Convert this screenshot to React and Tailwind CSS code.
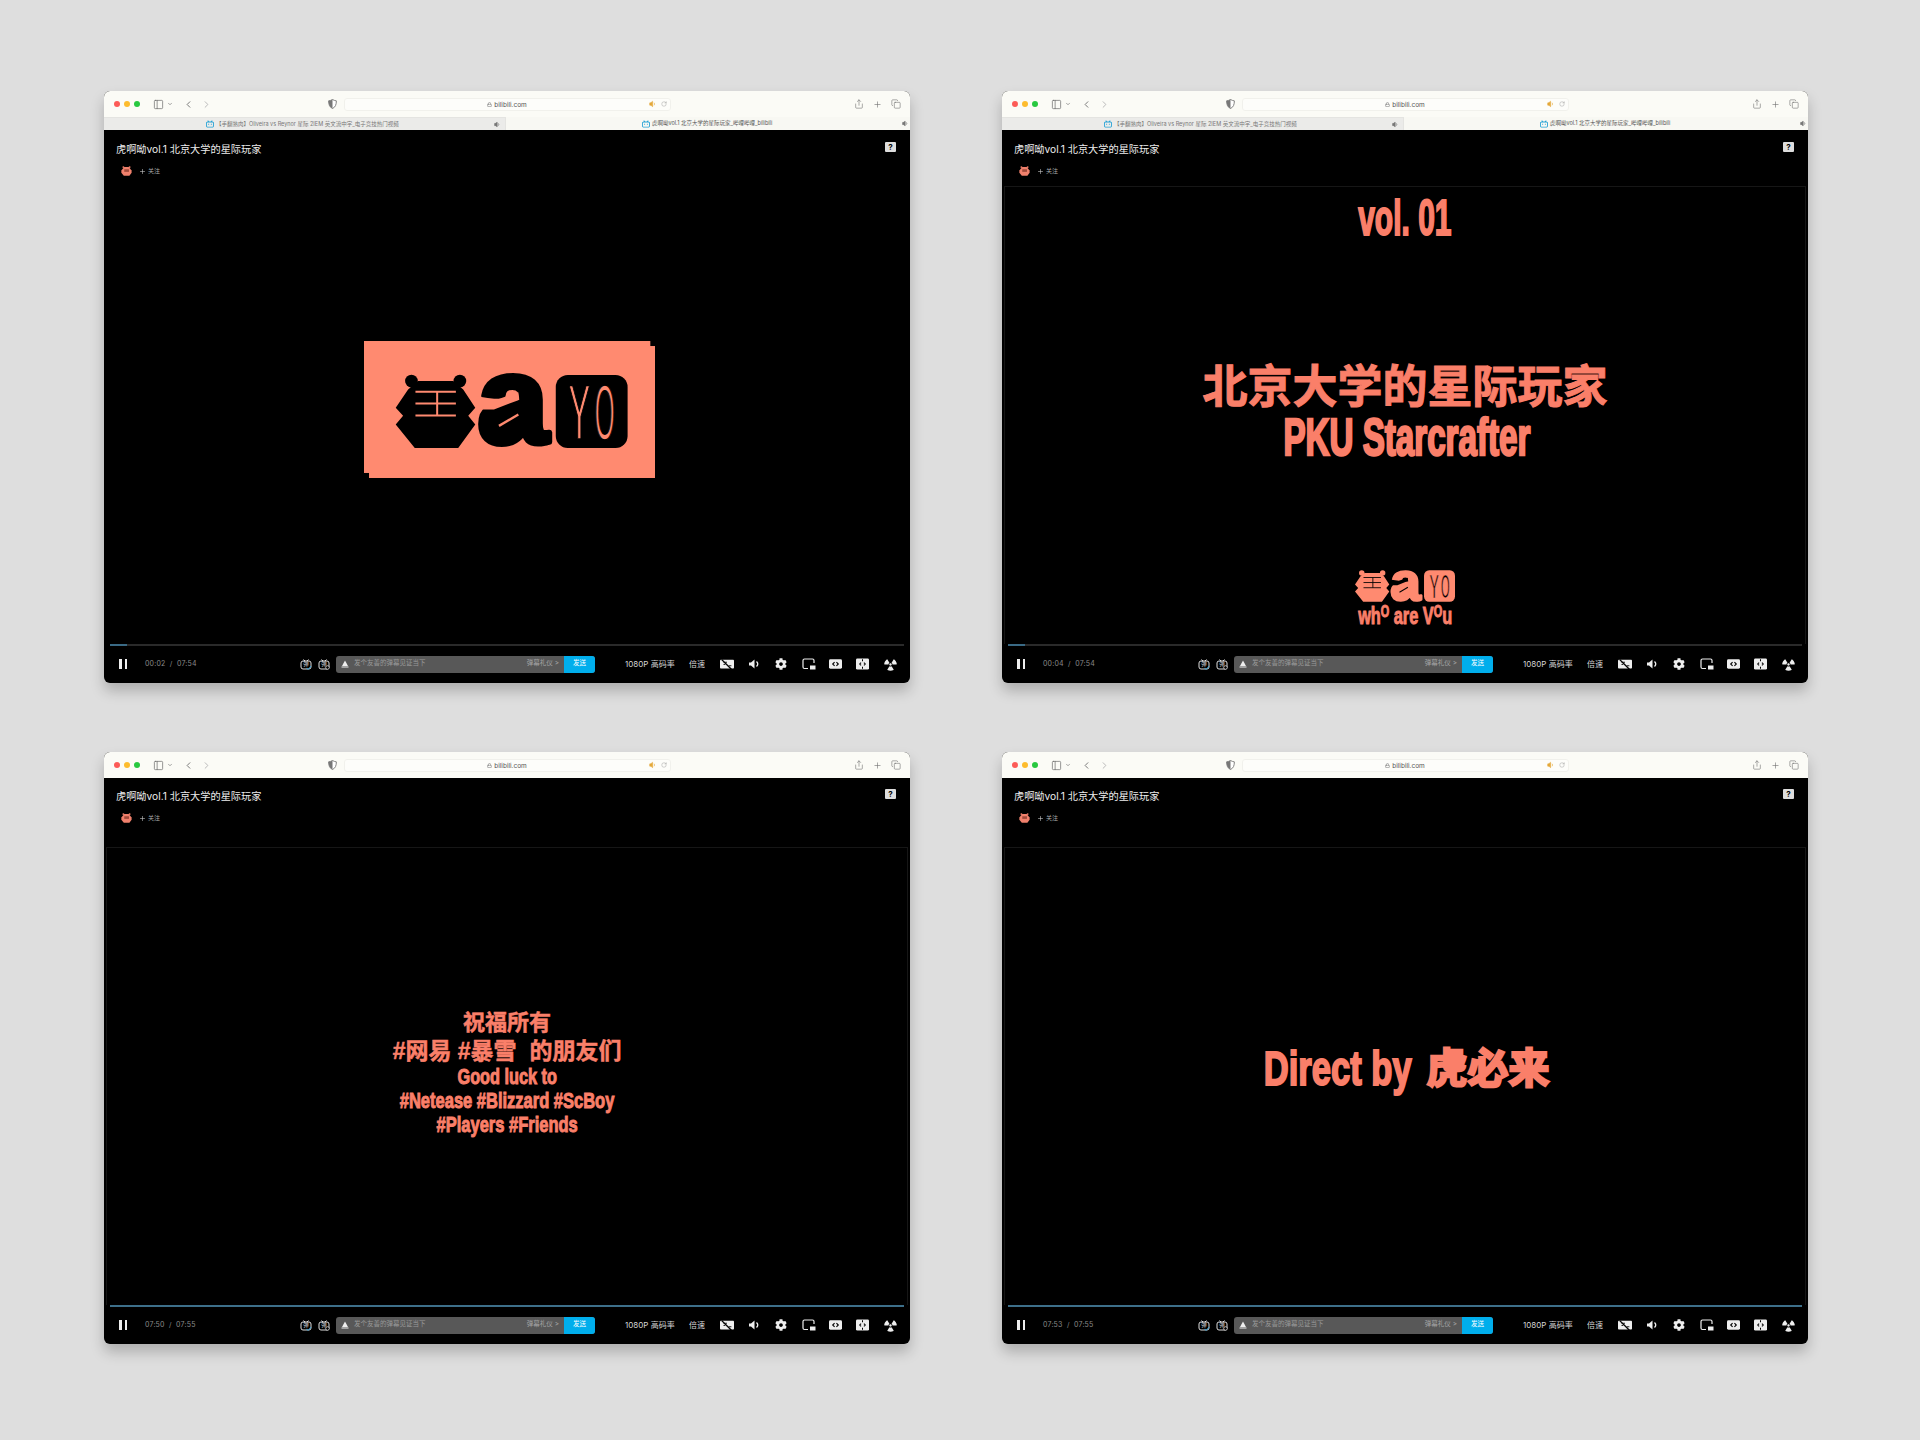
import { ChevronDown, ChevronLeft, ChevronRight, Copy, Lock, PanelLeft, Plus, RotateCw, Share, Volume1 } from 'lucide-react';
import { SiBilibili } from 'react-icons/si';
import { FaCog, FaRadiation } from 'react-icons/fa';

const ui = "font-['Inter','Noto_Sans_CJK_SC',sans-serif]";
const peach = '#ff8a70';

// tiger head + a + YO box, drawn in the coordinates of a 3x crop
function Mark({ fg, bg }) {
  return (
    <g>
      <circle cx="185" cy="155" r="19" fill={fg} />
      <circle cx="330" cy="155" r="19" fill={fg} />
      <polygon
        points="205,155 310,155 340,180 376,235 355,259 376,285 325,355 195,355 138,285 160,259 138,235 175,180"
        fill={fg}
      />
      <path d="M197 187H318M197 222H318M197 258H318M262 187V258" stroke={bg} strokeWidth="6" fill="none" />
      <text
        x="0"
        y="0"
        transform="translate(383 341) scale(1.03 1)"
        fontFamily="Liberation Sans"
        fontWeight="700"
        fontSize="370"
        fill={fg}
        stroke={fg}
        strokeWidth="18"
        strokeLinejoin="round"
      >
        a
      </text>
      <rect x="430" y="240" width="85" height="80" fill={fg} />
      <polygon points="380,200 442,210 505,188 505,212 432,240 380,240" fill={bg} />
      <path d="M447 289L505 255" stroke={bg} strokeWidth="7" />
      <rect x="617" y="137" width="215" height="218" rx="36" fill={fg} />
      <text
        x="0"
        y="0"
        transform="translate(655 329) scale(0.42 1)"
        fontFamily="Liberation Sans"
        fontSize="232"
        fill={bg}
        stroke={fg}
        strokeWidth="5"
      >
        Y
      </text>
      <text
        x="0"
        y="0"
        transform="translate(734 329) scale(0.33 1)"
        fontFamily="Liberation Sans"
        fontSize="232"
        fill={bg}
        stroke={fg}
        strokeWidth="5"
      >
        O
      </text>
    </g>
  );
}

function LogoCard() {
  return (
    <svg viewBox="43 35 871 410" className="w-[291px] h-[137px] shrink-0">
      <rect x="43" y="35" width="857" height="395" fill={peach} />
      <rect x="58" y="50" width="856" height="395" fill={peach} />
      <Mark fg="#000" bg={peach} />
    </svg>
  );
}

function SmallLogo() {
  return (
    <svg viewBox="138 130 694 225" className="w-[100px] h-[33px] shrink-0">
      <Mark fg={peach} bg="#000" />
    </svg>
  );
}

function TigerAvatar() {
  return (
    <svg viewBox="130 130 255 230" className="w-[11px] h-[10px]">
      <circle cx="185" cy="155" r="22" fill="#f0806c" />
      <circle cx="330" cy="155" r="22" fill="#f0806c" />
      <polygon points="205,155 310,155 376,235 376,285 325,355 195,355 138,285 138,235" fill="#f0806c" />
      <rect x="205" y="205" width="110" height="60" fill="#a0493a" />
    </svg>
  );
}

// condensed display line: the box keeps the real width, the glyphs are squeezed to fit
function Squeezed({ box, className, children }) {
  return (
    <div className={`flex justify-center shrink-0 ${box}`}>
      <span className={`shrink-0 whitespace-nowrap font-bold text-[#fa7f69] font-['Liberation_Sans','Noto_Sans_CJK_SC',sans-serif] ${className}`}>
        {children}
      </span>
    </div>
  );
}

function Toolbar() {
  return (
    <div className="flex items-center h-[26px] bg-[#fbfbf6] text-[#6f6f6f] shrink-0">
      <div className="flex gap-[4px] ml-[10px]">
        <span className="w-[6px] h-[6px] rounded-full bg-[#fc5b57]" />
        <span className="w-[6px] h-[6px] rounded-full bg-[#fdbc2e]" />
        <span className="w-[6px] h-[6px] rounded-full bg-[#28c840]" />
      </div>
      <PanelLeft className="w-[11px] h-[11px] ml-[13px]" strokeWidth={1.6} />
      <ChevronDown className="w-[6px] h-[6px] ml-[3px]" strokeWidth={2.5} />
      <ChevronLeft className="w-[11px] h-[11px] ml-[10px]" strokeWidth={2} />
      <ChevronRight className="w-[11px] h-[11px] ml-[7px] text-[#b5b5b5]" strokeWidth={2} />
      <svg viewBox="0 0 10 11" className="w-[9px] h-[10px] ml-[116px]">
        <path d="M5 .5C6.5 1.5 8 1.8 9.3 2c0 4-1 7-4.3 8.5C1.7 9 .7 6 .7 2 2 1.8 3.5 1.5 5 .5Z" fill="#fff" stroke="#777" />
        <path d="M5 .5C3.5 1.5 2 1.8.7 2c0 4 1 7 4.3 8.5Z" fill="#777" />
      </svg>
      <div className="flex items-center w-[327px] h-[13px] ml-[7px] rounded-[3px] bg-[#fdfdfa] border border-[#f1f1ec]">
        <div className="flex items-center justify-center gap-[2px] flex-1 pl-[20px] pt-[1px]">
          <Lock className="w-[5px] h-[5px] text-[#888]" strokeWidth={3} />
          <span className={`${ui} text-[6.5px] leading-[8px] text-[#555]`}>bilibili.com</span>
        </div>
        <Volume1 className="w-[8px] h-[8px] text-[#e4a93a] fill-[#e4a93a]" strokeWidth={1.5} />
        <RotateCw className="w-[6px] h-[6px] ml-[4px] mr-[3px] text-[#888]" strokeWidth={1.5} />
      </div>
      <Share className="w-[10px] h-[10px] ml-[183px]" strokeWidth={1.4} />
      <Plus className="w-[9px] h-[9px] ml-[9px]" strokeWidth={1.6} />
      <Copy className="w-[10px] h-[10px] ml-[9px]" strokeWidth={1.4} />
    </div>
  );
}

function TabStrip() {
  return (
    <div className={`flex h-[13px] shrink-0 ${ui} text-[5.5px] text-[#777]`}>
      <div className="flex items-center w-[402px] pl-[102px] bg-[#ebebe9] border-t border-[#e4e4e1] border-r">
        <SiBilibili className="w-[8px] h-[8px] text-[#27a3d6]" />
        <span className="ml-[2px] w-[183px] whitespace-nowrap">【手翻熟肉】Oliveira vs Reynor 星际 2IEM 英文流中字_电子竞技热门视频</span>
        <Volume1 className="w-[7px] h-[7px] ml-[95px] fill-[#777]" />
      </div>
      <div className="flex items-center flex-1 pl-[136px] bg-[#f8f8f3]">
        <SiBilibili className="w-[8px] h-[8px] text-[#27a3d6]" />
        <span className="ml-[2px] w-[126px] whitespace-nowrap text-[#555]">虎啊呦vol.1 北京大学的星际玩家_哔哩哔哩_bilibili</span>
        <Volume1 className="w-[7px] h-[7px] ml-[124px] fill-[#777]" />
      </div>
    </div>
  );
}

function DanmakuIcon({ off }) {
  return (
    <span className="relative flex items-center justify-center w-[12px] h-[12px] ml-[6px] first:ml-0">
      <svg viewBox="0 0 12 12" className="w-[12px] h-[12px]">
        <path d="M3.5 1.5L5 3M8.5 1.5L7 3" stroke="#ddd" strokeWidth="1" />
        <rect x="1" y="3" width="10" height="8" rx="2" fill="none" stroke="#ddd" strokeWidth="1" />
        {off ? (
          <circle cx="9.5" cy="9.5" r="1.8" fill="#000" stroke="#ddd" strokeWidth="0.8" />
        ) : (
          <path d="M6.5 10.5L8.5 11.2L11 8" fill="none" stroke="#37a5d8" strokeWidth="1" />
        )}
      </svg>
      <span className={`absolute top-[3px] ${ui} text-[5.5px] leading-[7px] text-[#ddd]`}>弹</span>
    </span>
  );
}

function ControlIcon({ children }) {
  return <span className="flex items-center justify-center w-[14px] h-[14px] text-[#eee]">{children}</span>;
}

function Controls({ time }) {
  return (
    <div className={`flex items-center h-[37.5px] shrink-0 ${ui}`}>
      <div className="flex gap-[3px] ml-[15px]">
        <span className="w-[2.5px] h-[10px] bg-[#eee]" />
        <span className="w-[2.5px] h-[10px] bg-[#eee]" />
      </div>
      <span className="ml-[18px] w-[155px] text-[7px] tracking-[0.2px] text-[#8a8a8a] whitespace-pre">{time}</span>
      <div className="flex w-[36px]">
        <DanmakuIcon />
        <DanmakuIcon off />
      </div>
      <div className="flex items-center w-[259px] h-[17px] rounded-[3px] overflow-hidden bg-[#585858]">
        <svg viewBox="0 0 8 8" className="w-[8px] h-[8px] ml-[5px]">
          <path d="M4 .5L7 6H1Z" fill="#eee" />
          <path d="M.5 7H7.5" stroke="#eee" />
        </svg>
        <span className="ml-[5px] text-[6.5px] text-[#9a9a9a] whitespace-nowrap">发个友善的弹幕见证当下</span>
        <span className="ml-auto mr-[5px] text-[6.5px] text-[#a5a5a5] whitespace-nowrap">弹幕礼仪 &gt;</span>
        <span className="flex items-center justify-center w-[31px] h-full bg-[#00aeec] text-[6.5px] text-white">发送</span>
      </div>
      <span className="ml-[30px] w-[50px] text-[8px] text-[#d5d5d5] whitespace-nowrap">1080P 高码率</span>
      <span className="ml-[14px] w-[16px] text-[8px] text-[#d5d5d5] whitespace-nowrap">倍速</span>
      <div className="flex gap-[13.2px] ml-[15px]">
        <ControlIcon>
          <svg viewBox="0 0 16 12" className="w-[16px] h-[12px]">
            <rect y="1" width="16" height="10" rx="1" fill="#eee" />
            <path d="M2 1L13 12" stroke="#000" strokeWidth="1.6" />
            <path d="M4 4H8M4 6.5H6M10 8H13" stroke="#000" strokeWidth="1" />
          </svg>
        </ControlIcon>
        <ControlIcon>
          <svg viewBox="0 0 12 12" className="w-[12px] h-[12px]">
            <path d="M1 4.5H3L6.5 1.5V10.5L3 7.5H1Z" fill="#eee" />
            <path d="M8.5 3.5C10 5 10 7 8.5 8.5" fill="none" stroke="#eee" strokeWidth="1.3" />
          </svg>
        </ControlIcon>
        <ControlIcon>
          <FaCog className="w-[12px] h-[12px]" />
        </ControlIcon>
        <ControlIcon>
          <svg viewBox="0 0 14 12" className="w-[14px] h-[12px]">
            <path d="M6 10.5H2.5A1.5 1.5 0 0 1 1 9V2.5A1.5 1.5 0 0 1 2.5 1H10.5A1.5 1.5 0 0 1 12 2.5V5" fill="none" stroke="#eee" strokeWidth="1.2" />
            <rect x="8" y="7.5" width="5.5" height="4" fill="#eee" />
          </svg>
        </ControlIcon>
        <ControlIcon>
          <svg viewBox="0 0 14 10" className="w-[13px] h-[10px]">
            <rect width="14" height="10" rx="1.5" fill="#eee" />
            <path d="M6 3L4 5L6 7M8 3L10 5L8 7" fill="none" stroke="#000" strokeWidth="1.2" />
          </svg>
        </ControlIcon>
        <ControlIcon>
          <svg viewBox="0 0 14 12" className="w-[13px] h-[12px]">
            <rect width="14" height="12" rx="1.5" fill="#eee" />
            <path d="M7 1V3M7 9V11M5.5 4.5L4 6L5.5 7.5M8.5 4.5L10 6L8.5 7.5" fill="none" stroke="#000" strokeWidth="1.1" />
          </svg>
        </ControlIcon>
        <ControlIcon>
          <FaRadiation className="w-[13px] h-[13px]" />
        </ControlIcon>
      </div>
    </div>
  );
}

function Window({ tabs, framed, time, playedClass, trackClass, children }) {
  return (
    <div className="flex flex-col w-[806px] h-[592px] rounded-[6px] overflow-hidden bg-black shadow-[0_8px_14px_rgba(0,0,0,0.22)]">
      <Toolbar />
      {tabs && <TabStrip />}
      <div className={`flex flex-col shrink-0 pl-[12px] ${ui} ${tabs ? 'h-[56px] pt-[11px]' : 'h-[69px] pt-[10px]'}`}>
        <div className="flex items-center justify-between pr-[14px]">
          <span className="text-[10.2px] leading-[16px] text-[#eee] whitespace-nowrap">虎啊呦vol.1 北京大学的星际玩家</span>
          <span className="flex items-center justify-center w-[11px] h-[10px] -mt-[5px] rounded-[1px] bg-[#ddd] text-[8px] leading-none font-bold text-black">?</span>
        </div>
        <div className="flex items-center mt-[9px] ml-[5px]">
          <TigerAvatar />
          <Plus className="w-[7px] h-[7px] ml-[7px] text-[#ccc]" strokeWidth={2} />
          <span className="ml-[2px] text-[6px] leading-[8px] text-[#aaa]">关注</span>
        </div>
      </div>
      <div className={`flex flex-col items-center flex-1 min-h-0 mx-[2px] ${framed ? 'border border-b-0 border-[#161616]' : 'border border-transparent'}`}>
        {children}
      </div>
      <div className="relative h-[1.5px] mx-[6px] shrink-0">
        <div className={`h-full ${trackClass}`} />
        <div className={`absolute left-0 top-0 h-full ${playedClass}`} />
      </div>
      <Controls time={time} />
    </div>
  );
}

export default function App() {
  return (
    <div className="w-[1920px] h-[1440px] bg-[#dedede] pt-[91px] pl-[104px]">
      <div className="grid grid-cols-[806px_806px] gap-x-[92px] gap-y-[69px]">
        <Window tabs time="00:02  /  07:54" trackClass="bg-[#2a2a2a]" playedClass="w-[17px] bg-[#3a6a85]">
          <div className="mt-[154px] ml-[5px]">
            <LogoCard />
          </div>
        </Window>

        <Window tabs framed time="00:04  /  07:54" trackClass="bg-[#2a2a2a]" playedClass="w-[17px] bg-[#3a6a85]">
          <Squeezed box="w-[94px] h-[58px] mt-[2px]" className="text-[50px] leading-[58px] scale-x-[0.6] [-webkit-text-stroke:2px_#fa7f69]">
            vol. 01
          </Squeezed>
          <Squeezed box="w-[402px] h-[54px] mt-[114px]" className="text-[45px] leading-[54px] [-webkit-text-stroke:1px_#fa7f69]">
            北京大学的星际玩家
          </Squeezed>
          <Squeezed box="w-[250px] h-[46px] ml-[4px]" className="text-[51px] leading-[46px] scale-x-[0.65] [-webkit-text-stroke:2.5px_#fa7f69]">
            PKU Starcrafter
          </Squeezed>
          <div className="mt-[108px]">
            <SmallLogo />
          </div>
          <Squeezed box="w-[96px] h-[20px]" className="text-[24px] leading-[20px] scale-x-[0.68] [-webkit-text-stroke:1px_#fa7f69]">
            wh<span className="text-[16px] align-[7px]">O</span> are V<span className="text-[16px] align-[7px]">O</span>u
          </Squeezed>
        </Window>

        <Window framed time="07:50  /  07:55" trackClass="bg-[#3d6f8a]" playedClass="w-full bg-[#3d6f8a]">
          <Squeezed box="w-[90px] h-[30px] mt-[160px]" className="text-[22px] leading-[30px] [-webkit-text-stroke:0.5px_#fa7f69]">
            祝福所有
          </Squeezed>
          <Squeezed box="w-[226px] h-[27px]" className="text-[23px] leading-[27px] [-webkit-text-stroke:0.5px_#fa7f69]">
            #网易 #暴雪&nbsp;&nbsp;的朋友们
          </Squeezed>
          <Squeezed box="w-[94px] h-[24px]" className="text-[22px] leading-[24px] scale-x-[0.74] [-webkit-text-stroke:1px_#fa7f69]">
            Good luck to
          </Squeezed>
          <Squeezed box="w-[215px] h-[24px]" className="text-[22px] leading-[24px] scale-x-[0.75] [-webkit-text-stroke:1px_#fa7f69]">
            #Netease #Blizzard #ScBoy
          </Squeezed>
          <Squeezed box="w-[144px] h-[24px]" className="text-[22px] leading-[24px] scale-x-[0.75] [-webkit-text-stroke:1px_#fa7f69]">
            #Players #Friends
          </Squeezed>
        </Window>

        <Window framed time="07:53  /  07:55" trackClass="bg-[#3d6f8a]" playedClass="w-full bg-[#3d6f8a]">
          <div className="flex items-center mt-[196px] ml-[4px]">
            <Squeezed box="w-[145px] h-[50px]" className="text-[48px] leading-[50px] scale-x-[0.72] [-webkit-text-stroke:2px_#fa7f69]">
              Direct by
            </Squeezed>
            <Squeezed box="w-[122px] h-[50px] ml-[17px]" className="text-[41px] leading-[50px] font-black [-webkit-text-stroke:2.5px_#fa7f69]">
              虎必来
            </Squeezed>
          </div>
        </Window>
      </div>
    </div>
  );
}
